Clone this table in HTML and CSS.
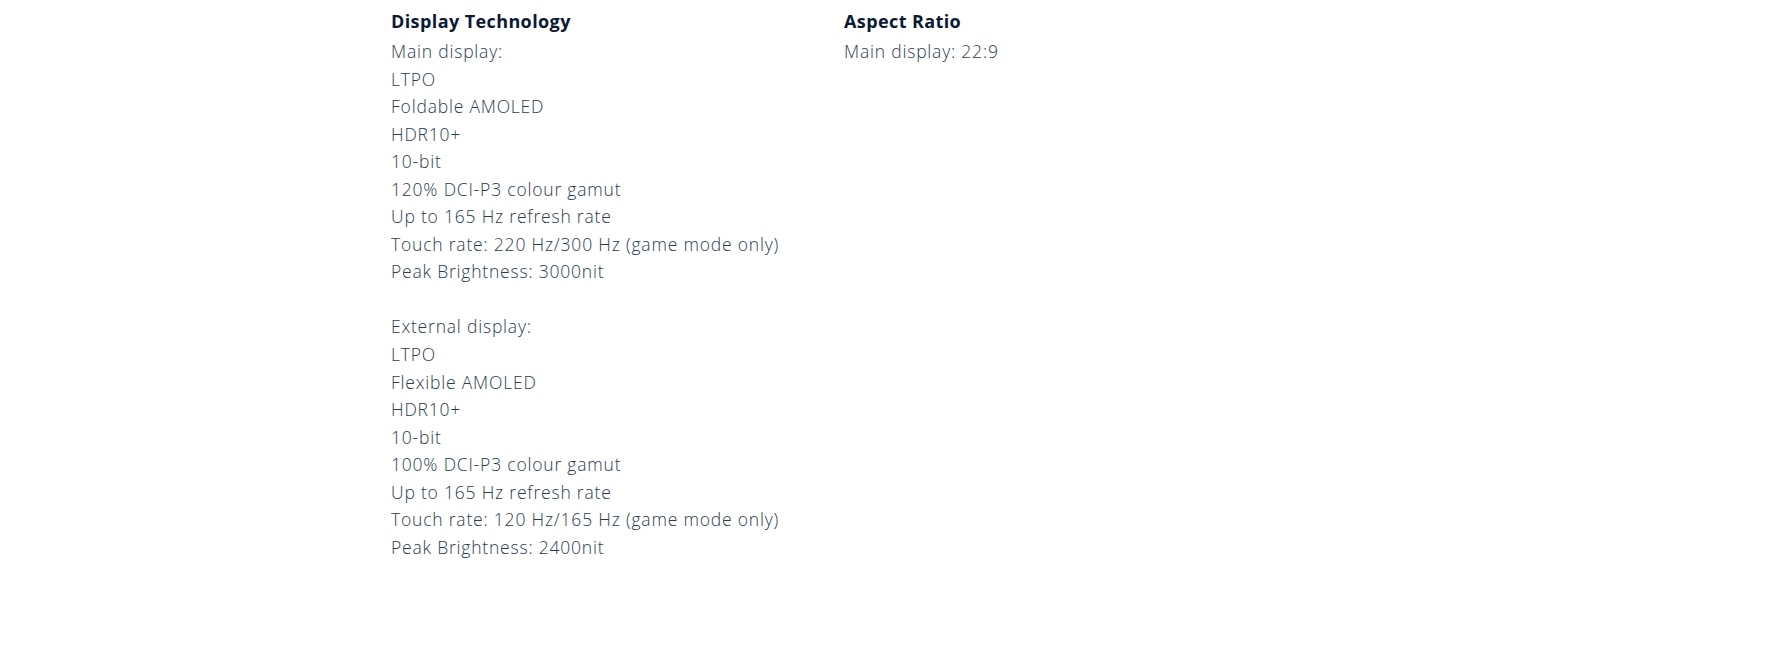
FILE: index.html
```html
<!DOCTYPE html>
<html lang="en">
<head>
<meta charset="utf-8">
<title>Specs</title>
<link rel="stylesheet" href="styles.css">
</head>
<body>
<div class="specs">
  <div class="spec">
    <h3 class="spec-title">Display Technology</h3>
    <p class="spec-value">Main display:<br>LTPO<br>Foldable AMOLED<br>HDR10+<br>10-bit<br>120% DCI-P3 colour gamut<br>Up to 165 Hz refresh rate<br>Touch rate: 220 Hz/300 Hz (game mode only)<br>Peak Brightness: 3000nit<br><br>External display:<br>LTPO<br>Flexible AMOLED<br>HDR10+<br>10-bit<br>100% DCI-P3 colour gamut<br>Up to 165 Hz refresh rate<br>Touch rate: 120 Hz/165 Hz (game mode only)<br>Peak Brightness: 2400nit</p>
  </div>
  <div class="spec">
    <h3 class="spec-title">Aspect Ratio</h3>
    <p class="spec-value">Main display: 22:9</p>
  </div>
</div>
</body>
</html>
```
FILE: styles.css
```css
html, body {
  margin: 0;
  padding: 0;
  background: #ffffff;
}
body {
  font-family: "Open Sans", "Liberation Sans", sans-serif;
}
.specs {
  width: 1000px;
  margin: 0 auto;
  padding-top: 8px;
  display: grid;
  grid-template-columns: 453px 1fr;
}
.spec-title {
  margin: 0;
  font-size: 18px;
  line-height: 26px;
  font-weight: 700;
  letter-spacing: 0.4px;
  color: #0b1a33;
}
.spec-value {
  margin: 4px 0 0;
  font-size: 17.5px;
  line-height: 27.55px;
  font-weight: 300;
  letter-spacing: 0.8px;
  color: #2c3a4e;
}
```
